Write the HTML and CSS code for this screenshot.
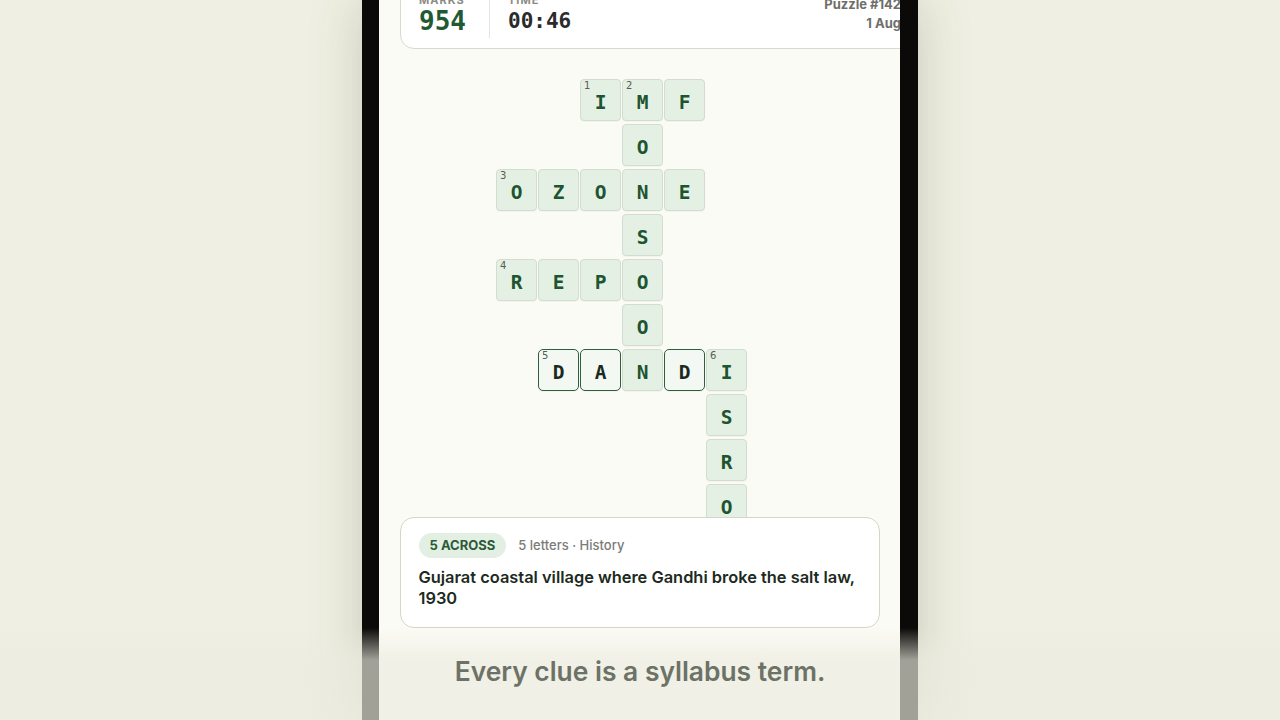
FILE: index.html
```html
<!DOCTYPE html>
<html lang="en">
<head>
<meta charset="utf-8">
<title>Crossword</title>
<link rel="stylesheet" href="styles.css">
</head>
<body>
<div class="stage">
  <div class="phone">
    <div class="screen">
      <header class="stats">
        <div class="stat stat-marks">
          <div class="label">MARKS</div>
          <div class="value marks">954</div>
        </div>
        <div class="divider"></div>
        <div class="stat">
          <div class="label">TIME</div>
          <div class="value time">00:46</div>
        </div>
        <div class="meta">
          <div>Puzzle #142</div>
          <div>1 Aug</div>
        </div>
      </header>

      <div class="board">
        <div class="grid">
          <div class="cell r0 c2"><span class="num">1</span>I</div>
          <div class="cell r0 c3"><span class="num">2</span>M</div>
          <div class="cell r0 c4">F</div>

          <div class="cell r1 c3">O</div>

          <div class="cell r2 c0"><span class="num">3</span>O</div>
          <div class="cell r2 c1">Z</div>
          <div class="cell r2 c2">O</div>
          <div class="cell r2 c3">N</div>
          <div class="cell r2 c4">E</div>

          <div class="cell r3 c3">S</div>

          <div class="cell r4 c0"><span class="num">4</span>R</div>
          <div class="cell r4 c1">E</div>
          <div class="cell r4 c2">P</div>
          <div class="cell r4 c3">O</div>

          <div class="cell r5 c3">O</div>

          <div class="cell active r6 c1"><span class="num">5</span>D</div>
          <div class="cell active r6 c2">A</div>
          <div class="cell r6 c3">N</div>
          <div class="cell active r6 c4">D</div>
          <div class="cell r6 c5"><span class="num">6</span>I</div>

          <div class="cell r7 c5">S</div>
          <div class="cell r8 c5">R</div>
          <div class="cell r9 c5">O</div>
        </div>
      </div>

      <section class="clue">
        <div class="clue-head">
          <span class="pill">5 ACROSS</span>
          <span class="clue-meta">5 letters · History</span>
        </div>
        <p class="clue-text">Gujarat coastal village where Gandhi broke the salt law, 1930</p>
      </section>
    </div>
  </div>
  <div class="fade">
    <p class="caption">Every clue is a syllabus term.</p>
  </div>
</div>
</body>
</html>
```

FILE: styles.css
```css
* { box-sizing: border-box; }

html, body {
  margin: 0;
  padding: 0;
}

body {
  width: 1280px;
  height: 720px;
  overflow: hidden;
  background: #efefe3;
  font-family: Inter, "Noto Sans", sans-serif;
}

.stage {
  position: relative;
  width: 1280px;
  height: 720px;
  display: flex;
  justify-content: center;
}

.phone {
  width: 556px;
  height: 720px;
  background: #0b0a08;
  padding: 0 18px 0 17px;
  box-shadow: 0 0 50px rgba(70, 70, 40, 0.22);
}

.screen {
  width: 521px;
  height: 100%;
  background: #fbfbf5;
  overflow: hidden;
  display: flex;
  flex-direction: column;
}

/* Header stats card */
.stats {
  flex: none;
  width: 520px;
  margin: -18px 0 0 21px;
  padding: 10.5px 18px 13.5px 18px;
  border: 1.5px solid #d9d9cd;
  border-radius: 14px;
  background: #ffffff;
  display: flex;
  align-items: stretch;
  gap: 18px;
}

.stat {
  display: flex;
  flex-direction: column;
}

.stat-marks {
  width: 52px;
}

.label {
  font-size: 11px;
  line-height: 12px;
  font-weight: 700;
  letter-spacing: 1px;
  color: #8a8a84;
}

.value {
  margin-top: 1px;
  font-family: "DejaVu Sans Mono", "Liberation Mono", monospace;
  font-weight: 700;
  line-height: 28px;
}

.marks {
  font-size: 26px;
  color: #1f5a33;
}

.time {
  font-size: 21px;
  color: #2a2b2a;
}

.divider {
  width: 1px;
  background: #e6e6de;
  margin-bottom: -3px;
}

.meta {
  margin-left: auto;
  margin-top: 1px;
  text-align: right;
  font-size: 13px;
  line-height: 19px;
  font-weight: 700;
  color: #6e6e6a;
}

/* Board */
.board {
  flex: none;
  height: 468px;
  padding-top: 30px;
  overflow: hidden;
  display: flex;
  justify-content: center;
}

.grid {
  margin-left: 6px;
  display: grid;
  grid-template-columns: repeat(7, 41px);
  grid-auto-rows: 42px;
  column-gap: 1px;
  row-gap: 3px;
}

.cell {
  position: relative;
  border: 1.5px solid #d3dcd0;
  border-radius: 4px;
  background: #e5f0e4;
  box-shadow: 0 1px 0 rgba(0, 0, 0, 0.03);
  display: flex;
  align-items: center;
  justify-content: center;
  padding-top: 5px;
  font-family: "DejaVu Sans Mono", "Liberation Mono", monospace;
  font-weight: 700;
  font-size: 19.5px;
  color: #1d5530;
}

.cell.active {
  background: #f3f9f2;
  border: 1.6px solid #2e5e3c;
  border-radius: 5px;
  color: #1a2a1e;
}

.num {
  position: absolute;
  top: 0px;
  left: 3px;
  font-family: "DejaVu Sans", sans-serif;
  font-weight: 400;
  font-size: 10px;
  line-height: 11px;
  color: #5a5a56;
}

.r0 { grid-row: 1; }
.r1 { grid-row: 2; }
.r2 { grid-row: 3; }
.r3 { grid-row: 4; }
.r4 { grid-row: 5; }
.r5 { grid-row: 6; }
.r6 { grid-row: 7; }
.r7 { grid-row: 8; }
.r8 { grid-row: 9; }
.r9 { grid-row: 10; }

.c0 { grid-column: 1; }
.c1 { grid-column: 2; }
.c2 { grid-column: 3; }
.c3 { grid-column: 4; }
.c4 { grid-column: 5; }
.c5 { grid-column: 6; }
.c6 { grid-column: 7; }

/* Clue card */
.clue {
  flex: none;
  margin: 0 20px 0 21px;
  padding: 14.5px 17.5px 18.5px 17.5px;
  border: 1.5px solid #d6d6c8;
  border-radius: 14px;
  background: #ffffff;
}

.clue-head {
  display: flex;
  align-items: center;
  gap: 12px;
}

.pill {
  height: 25px;
  line-height: 25px;
  padding: 0 11px;
  border-radius: 13px;
  background: #e3efe2;
  color: #2c5a39;
  font-size: 13px;
  font-weight: 700;
}

.clue-meta {
  font-size: 13px;
  font-weight: 500;
  color: #7b7b78;
}

.clue-text {
  margin: 9px 0 0;
  font-size: 16.4px;
  line-height: 21px;
  font-weight: 600;
  color: #1c2a21;
}

/* Bottom fade with caption */
.fade {
  position: absolute;
  left: 0;
  right: 0;
  bottom: 0;
  height: 92px;
  background: linear-gradient(to bottom,
    rgba(235, 235, 223, 0) 0px,
    rgba(235, 235, 223, 0.67) 32px,
    rgba(235, 235, 223, 0.67) 100%);
  padding-top: 28px;
}

.caption {
  margin: 0;
  text-align: center;
  font-size: 26.4px;
  line-height: 30px;
  font-weight: 600;
  color: #6d7266;
}
```
